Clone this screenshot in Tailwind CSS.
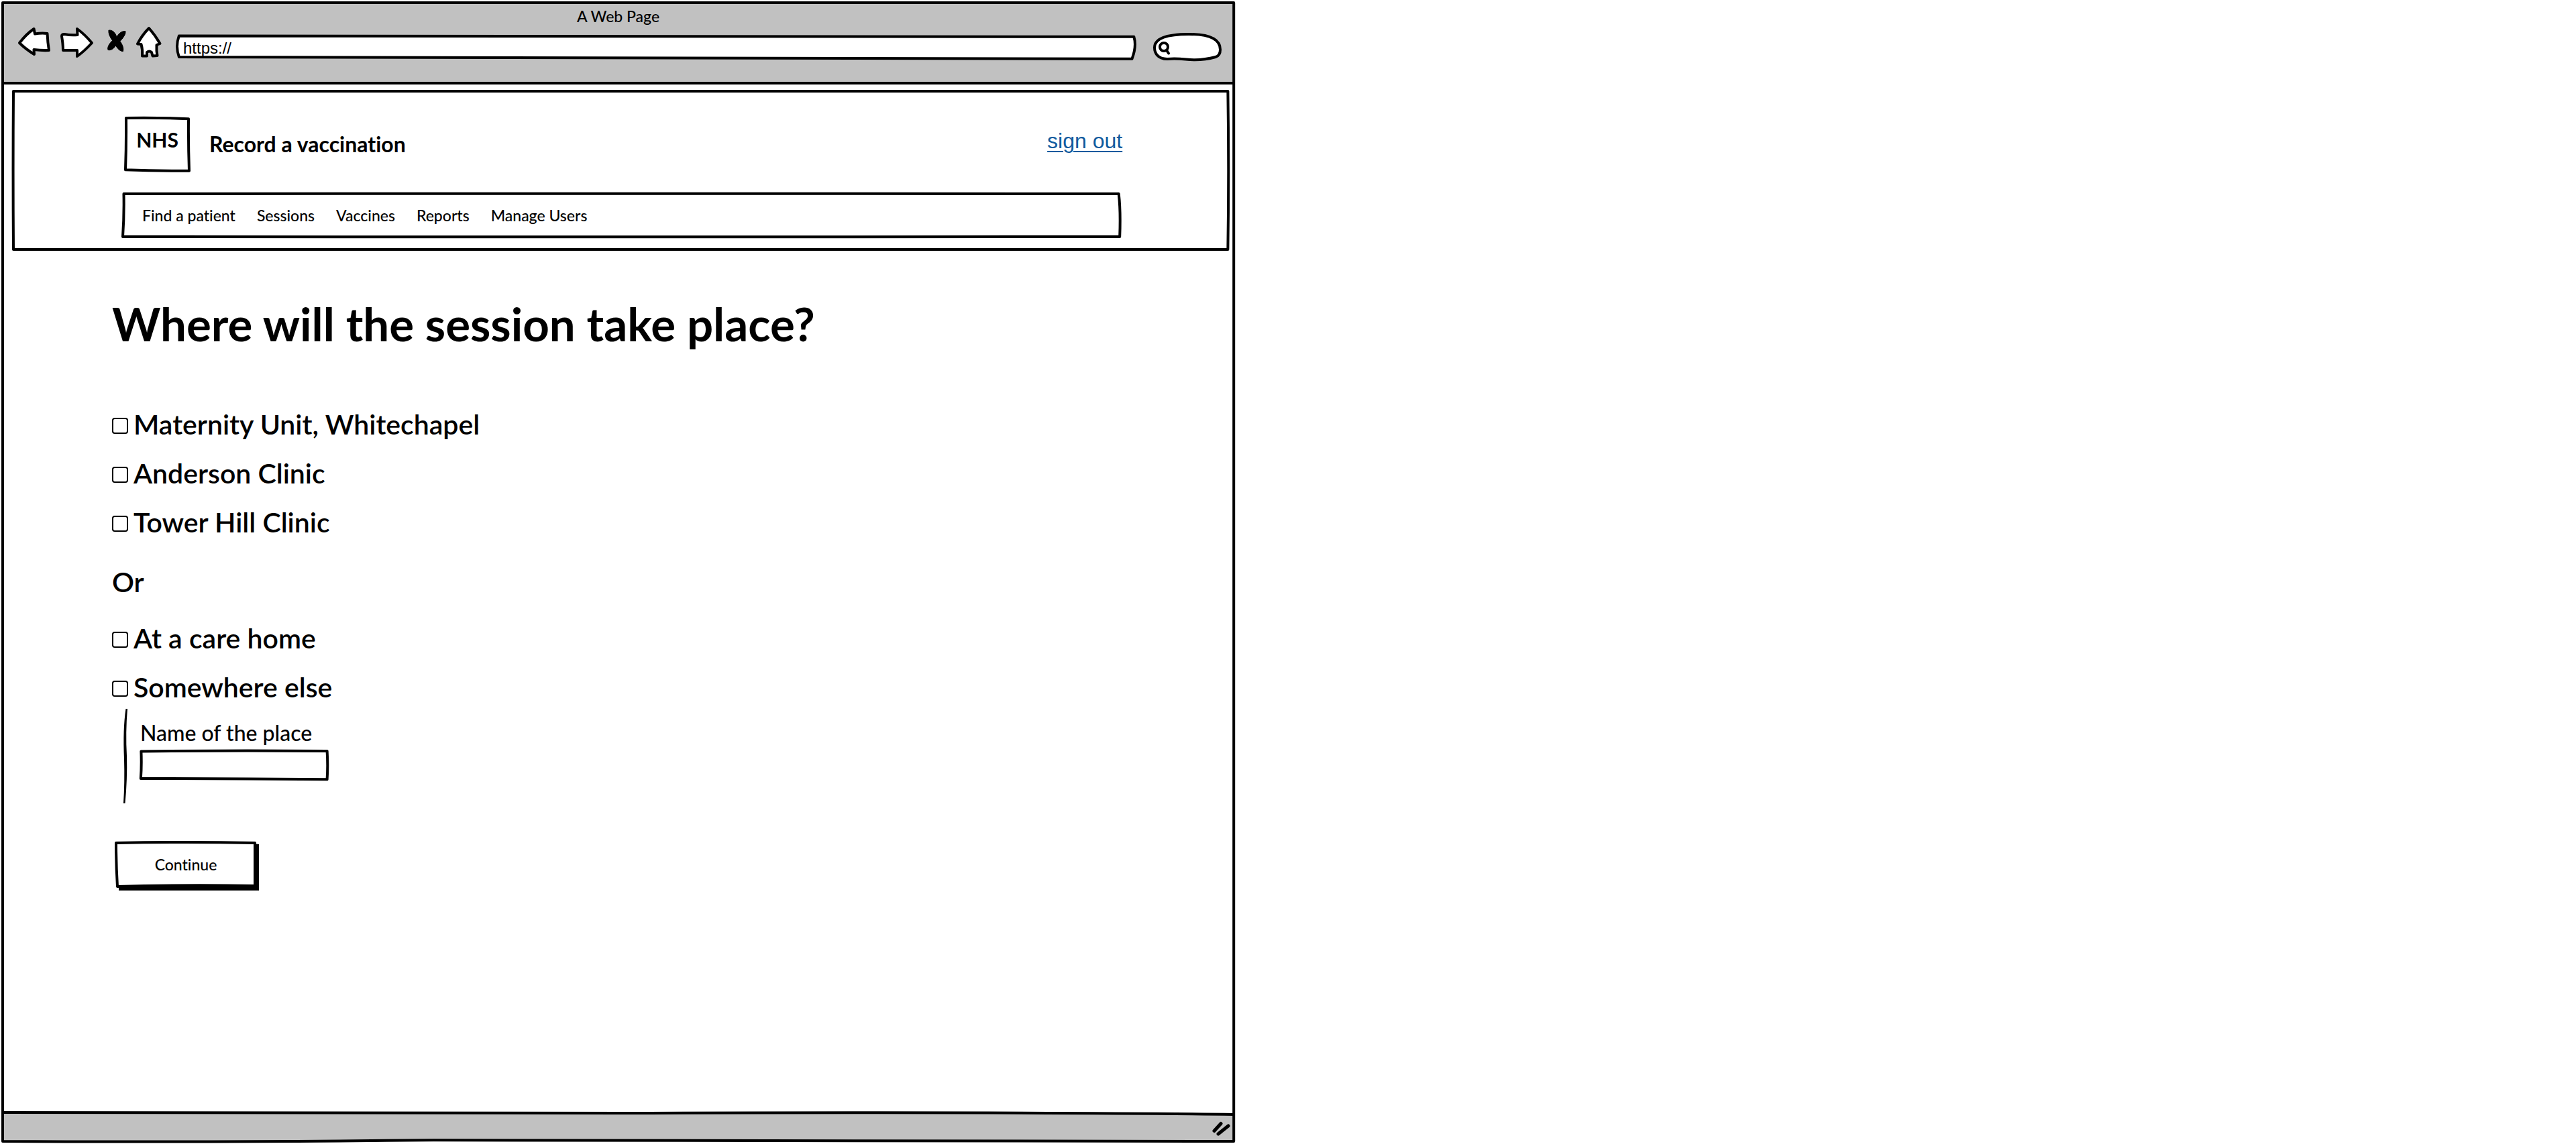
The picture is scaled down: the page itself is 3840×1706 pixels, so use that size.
<!DOCTYPE html>
<html lang="en">
<head>
<meta charset="utf-8">
<title>A Web Page</title>
<script src="https://cdn.jsdelivr.net/npm/@tailwindcss/browser@4"></script>
</head>
<body class="bg-white font-['Lato',sans-serif] text-black [font-variant-ligatures:none]">
<div class="relative flex min-h-screen w-[48%] flex-col p-1">

  <!-- browser chrome -->
  <div class="border-b-4 border-black bg-[#c1c1c1] pt-[6px] pb-[32px]">
    <p class="text-center text-[23px] leading-7 font-medium">A Web Page</p>
    <div class="flex items-start gap-3 pr-[19px] pl-5">
      <button type="button" aria-label="Back">
        <svg class="block h-[50px] w-[52px]" viewBox="0 0 52 50" fill="#fff" stroke="#000" stroke-width="4" stroke-linejoin="round"><path d="M5 26 Q15 13 26.500 5 L28 12.500 Q38 11 46.500 12 Q47 25 49 37 Q38 37.500 26.500 36 L27 43 Q14 35 5 26Z"/></svg>
      </button>
      <button type="button" aria-label="Forward">
        <svg class="block h-[50px] w-[52px]" viewBox="0 0 52 50" fill="#fff" stroke="#000" stroke-width="4" stroke-linejoin="round"><path d="M4 16 Q4 13 8 13 Q18 15 27.500 14 L27 5 Q38 13 49 26 Q38 38 27 46 L27 37 L6 37 Q6 28 4 16Z"/></svg>
      </button>
      <button type="button" aria-label="Stop">
        <svg class="block h-[50px] w-[36px]" viewBox="0 0 36 50" fill="#000" stroke="#000" stroke-width="1" stroke-linejoin="round"><path d="M10 7 Q18 6 22 17 Q27 8 35 8.500 Q36 14 27 23.500 Q33 32 31.500 38.500 Q26 39 20.500 30 Q15 38 9 36.500 Q7 31 15.500 22.500 Q9 13 10 7Z"/></svg>
      </button>
      <button type="button" aria-label="Home">
        <svg class="block h-[50px] w-[44px]" viewBox="0 0 44 50" fill="#fff" stroke="#000" stroke-width="4" stroke-linejoin="round"><path d="M22 4 Q31 14 38.500 27 L33.500 29 Q33 38 34.500 45 L27.500 45.500 L26 40 Q22.500 37 19 40 L19 45.500 L12 45.500 Q13 37 10.500 28 L5 27.500 Q12 14 22 4Z"/></svg>
      </button>
      <div class="relative mt-[14px] ml-2 h-[35px] flex-1">
        <svg class="absolute inset-0 size-full overflow-visible" viewBox="0 0 100 100" preserveAspectRatio="none" fill="#fff" stroke="#000" stroke-width="4" stroke-linejoin="round"><path vector-effect="non-scaling-stroke" d="M.2 4 Q40 2 99.800 8 Q100.100 48 99.600 102 Q50 97 .2 94 Q-.2 50 .2 4Z"/></svg>
        <input aria-label="Address" type="text" value="https://" class="relative block size-full bg-transparent px-[9px] pt-1 font-['Liberation_Sans',sans-serif] text-[24px] leading-7 outline-none">
      </div>
      <div class="relative mt-[13px] ml-[15px] h-[39px] w-[100px]">
        <svg class="absolute inset-0 size-full overflow-visible" viewBox="0 0 100 39" preserveAspectRatio="none" fill="#fff" stroke="#000" stroke-width="4" stroke-linecap="round"><path d="M20 37 C5 37 1 27 1 20 C1 6 20 0 52 0 C85 0 99 8 99 23 Q99 32 92 34 Q70 40 48 37.500 Q32 36 20 37Z"/><circle cx="15" cy="19" r="6"/><path d="M19 24 L22 28.500"/></svg>
        <input aria-label="Search" type="search" class="relative block size-full bg-transparent pl-8 outline-none">
      </div>
    </div>
  </div>

  <!-- service header -->
  <header class="relative mt-[10px] mr-[7px] ml-4 px-[163px] pt-10 pb-[19px]">
    <svg class="absolute inset-0 size-full overflow-visible" viewBox="0 0 100 100" preserveAspectRatio="none" fill="none" stroke="#000" stroke-width="4" stroke-linejoin="round"><path vector-effect="non-scaling-stroke" d="M0 0 Q50 -.5 99.900 0 Q100 50 99.900 100 Q50 99.500 0 100 Q-.05 50 0 0Z"/></svg>
    <div class="relative -mr-1 ml-1 flex">
      <div class="relative flex h-[78px] w-[95px] justify-center pt-3">
        <svg class="absolute inset-0 size-full overflow-visible" viewBox="0 0 100 100" preserveAspectRatio="none" fill="none" stroke="#000" stroke-width="4" stroke-linejoin="round"><path vector-effect="non-scaling-stroke" d="M1 0 Q50 -1 99 1.500 Q98.500 50 100 101 Q50 101.500 0 99 Q1.500 50 1 0Z"/></svg>
        <span class="relative text-[30px] leading-10 font-bold">NHS</span>
      </div>
      <p class="ml-[30px] self-center text-[32px] leading-10 font-bold">Record a vaccination</p>
      <a href="#" class="mt-[14px] ml-auto self-start font-['Liberation_Sans',sans-serif] text-[32px] leading-10 text-[#0f5a9e] underline decoration-2 underline-offset-4">sign out</a>
    </div>
    <nav class="relative mt-[35px] flex h-16 items-center gap-8 pl-[29px] text-[23px] leading-7 font-medium">
      <svg class="absolute inset-0 size-full overflow-visible" viewBox="0 0 100 100" preserveAspectRatio="none" fill="none" stroke="#000" stroke-width="4" stroke-linejoin="round"><path vector-effect="non-scaling-stroke" d="M.1 0 Q50 -1 99.900 0 Q100.100 40 100 100 Q50 101 0 100 Q.15 50 .1 0Z"/></svg>
      <a href="#" class="relative">Find a patient</a>
      <a href="#" class="relative">Sessions</a>
      <a href="#" class="relative">Vaccines</a>
      <a href="#" class="relative">Reports</a>
      <a href="#" class="relative">Manage Users</a>
    </nav>
  </header>

  <main class="mt-[71px] pl-[163px]">
    <h1 class="text-[69px] leading-20 font-bold">Where will the session take place?</h1>
    <form class="mt-[86px] text-[41px] leading-12 font-semibold">
      <div class="flex flex-col gap-[25px]">
        <label class="flex items-center gap-2"><input type="checkbox" class="mt-1 size-6 appearance-none rounded-sm border-2 border-black bg-white">Maternity Unit, Whitechapel</label>
        <label class="flex items-center gap-2"><input type="checkbox" class="mt-1 size-6 appearance-none rounded-sm border-2 border-black bg-white">Anderson Clinic</label>
        <label class="flex items-center gap-2"><input type="checkbox" class="mt-1 size-6 appearance-none rounded-sm border-2 border-black bg-white">Tower Hill Clinic</label>
      </div>
      <p class="mt-[41px]">Or</p>
      <div class="mt-9 flex flex-col gap-[25px]">
        <label class="flex items-center gap-2"><input type="checkbox" class="mt-1 size-6 appearance-none rounded-sm border-2 border-black bg-white">At a care home</label>
        <label class="flex items-center gap-2"><input type="checkbox" class="mt-1 size-6 appearance-none rounded-sm border-2 border-black bg-white">Somewhere else</label>
      </div>
      <div class="mt-2 ml-4 flex gap-[18px]">
        <svg class="h-[141px] w-2" viewBox="0 0 8 141" aria-hidden="true"><path d="M4.500 0 Q0 30 2 75 Q3 110 1 141 L3.500 141 Q7 105 6 70 Q4 35 7 0Z"/></svg>
        <div class="pt-4">
          <label for="place" class="block text-[32px] leading-10 font-medium">Name of the place</label>
          <div class="relative mt-[7px] h-11 w-[280px]">
            <svg class="absolute inset-0 size-full overflow-visible" viewBox="0 0 100 100" preserveAspectRatio="none" fill="none" stroke="#000" stroke-width="4" stroke-linejoin="round"><path vector-effect="non-scaling-stroke" d="M.5 1 Q50 -3 99.500 0 Q100 50 99.500 96 Q50 93 .3 93 Q.8 50 .5 1Z"/></svg>
            <input id="place" type="text" class="relative block size-full bg-transparent px-3 text-[23px] leading-7 font-medium outline-none">
          </div>
        </div>
      </div>
      <button type="button" class="relative mt-[57px] ml-1 block h-[67px] w-[212px] text-[23px] leading-7 font-medium">
        <svg class="absolute inset-0 size-full overflow-visible" viewBox="0 0 212 67" preserveAspectRatio="none" stroke="#000" stroke-linejoin="round"><path stroke="none" d="M6 60 L206 60 L206 3 L215 4 L215 73 L6 73Z"/><path fill="#fff" stroke-width="4" d="M2 2 Q105 0 209 2 L209 66 Q105 64 4 67 Q2 35 2 2Z"/></svg>
        <span class="relative">Continue</span>
      </button>
    </form>
  </main>

  <!-- status bar -->
  <footer class="relative mt-auto h-[43px]">
    <svg class="absolute inset-0 size-full overflow-visible" viewBox="0 0 100 43" preserveAspectRatio="none" fill="#c1c1c1" stroke="none"><path d="M0 0 Q10 2 50 1 Q85 -1 100 3 L100 43 L0 43Z"/><path fill="none" stroke="#000" stroke-width="4" vector-effect="non-scaling-stroke" d="M0 0 Q10 2 50 1 Q85 -1 100 3"/></svg>
    <svg class="absolute right-1 bottom-[6px] h-6 w-[30px]" viewBox="0 0 30 24" stroke="#000" stroke-width="5" stroke-linecap="round" aria-hidden="true"><path d="M5 14.500 L15 3.500 M11 19 L26 7"/></svg>
  </footer>

  <!-- window outline -->
  <svg class="pointer-events-none absolute inset-1 h-[calc(100%-8px)] w-[calc(100%-8px)] overflow-visible" viewBox="0 0 100 100" preserveAspectRatio="none" fill="none" stroke="#000" stroke-width="4" stroke-linejoin="round" aria-hidden="true"><path vector-effect="non-scaling-stroke" d="M0 0 L100 0 L100 100 Q60 100 35 99.900 Q15 100.100 0 100Z"/></svg>
</div>
</body>
</html>
